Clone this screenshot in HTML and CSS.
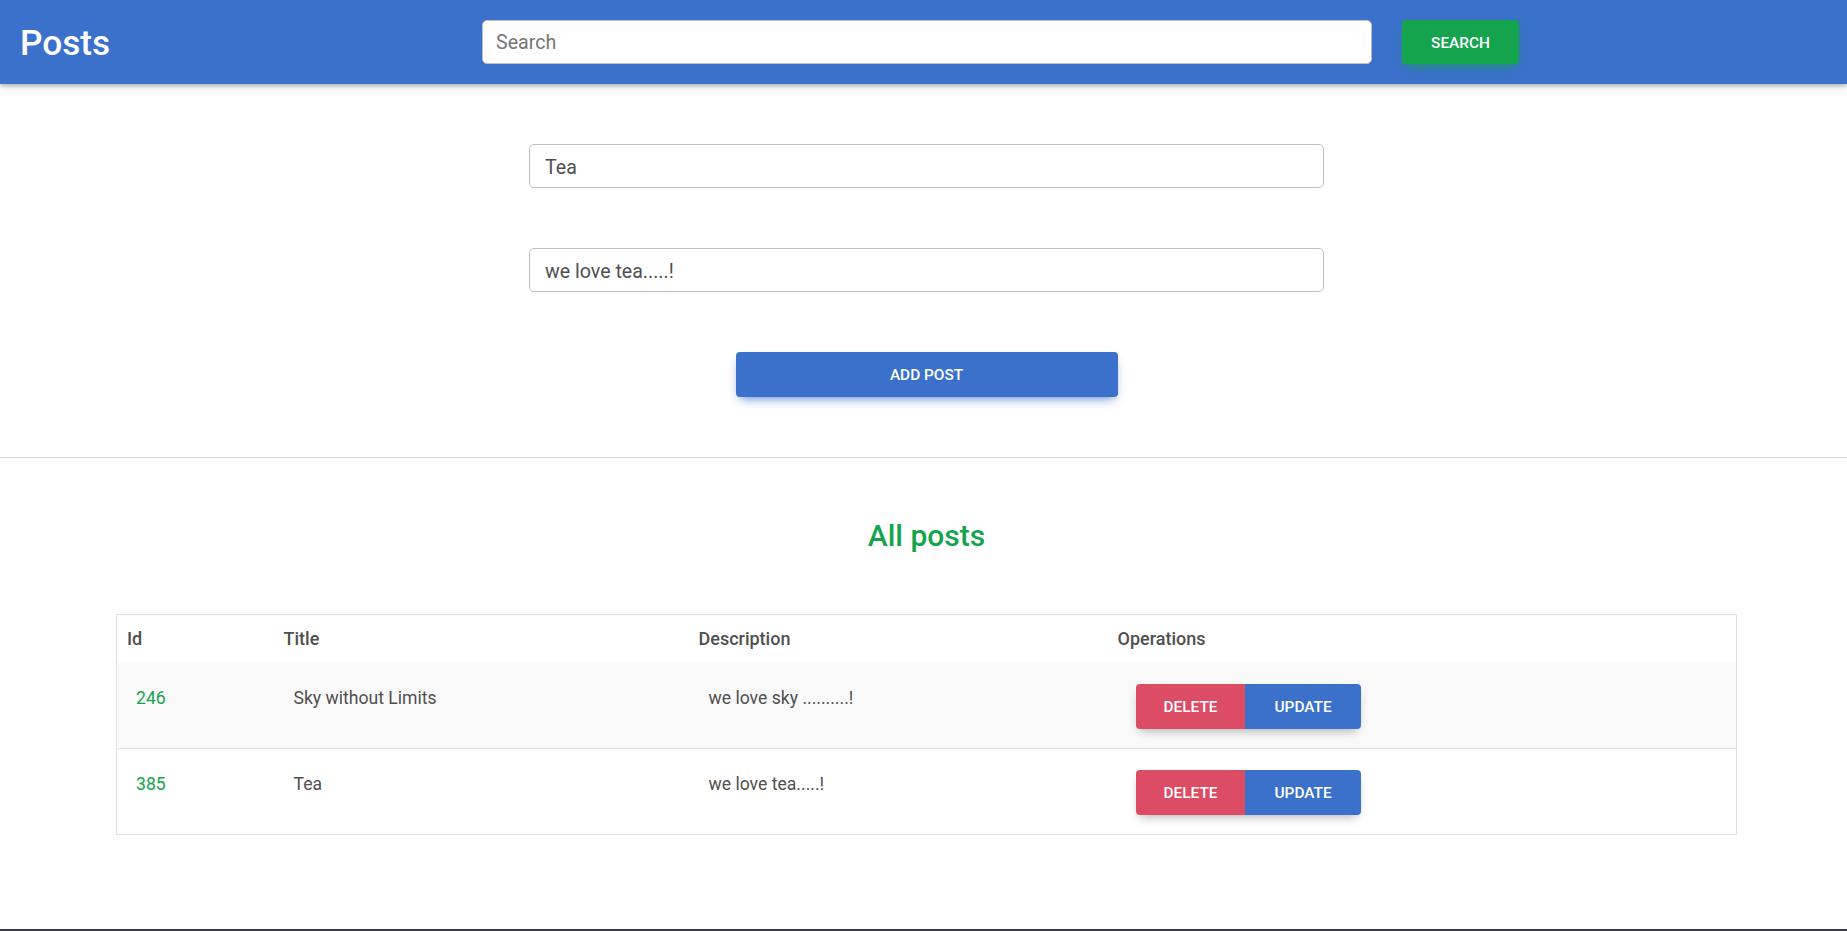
FILE: index.html
```html
<!DOCTYPE html>
<html lang="en">
<head>
<meta charset="utf-8">
<title>Posts</title>
<link rel="stylesheet" href="styles.css">
</head>
<body>
<header class="navbar">
  <h1 class="brand">Posts</h1>
  <form class="search-form">
    <input class="search-input" type="text" placeholder="Search">
    <button type="button" class="btn btn-success search-btn">Search</button>
  </form>
</header>

<section class="post-form">
  <input class="field" type="text" value="Tea">
  <input class="field" type="text" value="we love tea.....!">
  <button type="button" class="btn btn-primary add-btn">Add post</button>
</section>

<hr class="divider">

<section class="posts">
  <h2 class="posts-title">All posts</h2>
  <table class="posts-table">
    <colgroup>
      <col class="c-id">
      <col class="c-title">
      <col class="c-desc">
      <col class="c-ops">
    </colgroup>
    <thead>
      <tr>
        <th>Id</th>
        <th>Title</th>
        <th>Description</th>
        <th>Operations</th>
      </tr>
    </thead>
    <tbody>
      <tr class="striped">
        <td class="id">246</td>
        <td>Sky without Limits</td>
        <td>we love sky ..........!</td>
        <td>
          <div class="btn-group">
            <button type="button" class="btn btn-danger">Delete</button>
            <button type="button" class="btn btn-primary">Update</button>
          </div>
        </td>
      </tr>
      <tr>
        <td class="id">385</td>
        <td>Tea</td>
        <td>we love tea.....!</td>
        <td>
          <div class="btn-group">
            <button type="button" class="btn btn-danger">Delete</button>
            <button type="button" class="btn btn-primary">Update</button>
          </div>
        </td>
      </tr>
    </tbody>
  </table>
</section>

<footer class="footer"></footer>
</body>
</html>
```

FILE: styles.css
```css
html {
  overflow: hidden;
}

body {
  margin: 0;
  font-family: Roboto, "Liberation Sans", sans-serif;
  color: #4f4f4f;
  background: #fff;
}

/* ---------- navbar ---------- */
.navbar {
  height: 84px;
  background: #3b71ca;
  display: flex;
  align-items: center;
  padding-left: 20px;
  box-shadow: 0 2px 4px rgba(0, 0, 0, 0.28), 0 4px 12px rgba(0, 0, 0, 0.07);
  position: relative;
  z-index: 1;
}

.brand {
  margin: 0;
  padding-top: 2px;
  width: 462px;
  font-size: 35.2px;
  font-weight: 500;
  color: #fff;
  line-height: 1.2;
}

.search-form {
  display: flex;
  align-items: center;
  gap: 30px;
  margin: 0;
}

.search-input {
  box-sizing: border-box;
  width: 890px;
  height: 44px;
  border: 1px solid #bdbdbd;
  border-radius: 5px;
  padding: 1px 13px 0;
  font-family: inherit;
  font-size: 19.6px;
  color: #4f4f4f;
  background: #fff;
  outline: none;
}

.search-input::placeholder {
  color: #757575;
}

/* ---------- buttons ---------- */
.btn {
  box-sizing: border-box;
  border: 0;
  border-radius: 4px;
  height: 45px;
  padding: 3px 29px 0;
  font-family: inherit;
  font-size: 15.4px;
  font-weight: 500;
  text-transform: uppercase;
  color: #fff;
  cursor: pointer;
  line-height: 1;
}

.btn-primary {
  background: #3b71ca;
  box-shadow: 0 5px 10px -4px rgba(59, 113, 202, 0.9);
}

.btn-success {
  background: #14a44d;
  box-shadow: 0 5px 10px -4px rgba(20, 164, 77, 0.9);
}

.btn-danger {
  background: #dc4c64;
}

.search-btn {
  width: 117px;
  height: 44px;
  padding: 3px 0 0;
}

/* ---------- form ---------- */
.post-form {
  display: flex;
  flex-direction: column;
  align-items: center;
  gap: 60px;
  padding: 60px 0 60px 6px;
}

.field {
  box-sizing: border-box;
  width: 795px;
  height: 44px;
  border: 1px solid #bdbdbd;
  border-radius: 5px;
  padding: 2px 15px 0;
  font-family: inherit;
  font-size: 19.6px;
  color: #4f4f4f;
  background: #fff;
  outline: none;
}

.add-btn {
  width: 382px;
  padding: 3px 0 0;
}

.divider {
  margin: 0;
  border: 0;
  border-top: 1px solid #dcdcdc;
}

/* ---------- posts ---------- */
.posts {
  padding: 60px 0 0 6px;
  display: flex;
  flex-direction: column;
  align-items: center;
  gap: 60px;
}

.posts-title {
  margin: 0;
  font-size: 30px;
  font-weight: 500;
  line-height: 36px;
  color: #14a44d;
}

.posts-table {
  width: 1620px;
  border-collapse: collapse;
  table-layout: fixed;
  border: 1px solid #e0e0e0;
}

.c-id { width: 157px; }
.c-title { width: 415px; }
.c-desc { width: 419px; }
.c-ops { width: 629px; }

.posts-table th {
  text-align: left;
  font-size: 18px;
  font-weight: 500;
  line-height: 26px;
  padding: 11px 10px;
  color: #4f4f4f;
}

.posts-table td {
  font-size: 17.6px;
  line-height: 28px;
  padding: 21px 20px 19px;
  vertical-align: top;
  border-top: 1px solid #e0e0e0;
  color: #4f4f4f;
}

.posts-table td:first-child {
  padding-left: 19px;
}

.posts-table tbody tr:first-child td {
  border-top: 0;
}

.posts-table tr.striped td {
  background: #f9f9f9;
}

.posts-table td.id {
  color: #14a44d;
}

.btn-group {
  display: inline-flex;
  margin-left: 8px;
  border-radius: 4px;
  box-shadow: 0 5px 10px -4px rgba(0, 0, 0, 0.35);
}

.btn-group .btn {
  box-shadow: none;
  border-radius: 0;
  padding: 3px 28px 0;
}

.btn-group .btn-primary {
  padding: 3px 29px 0;
}

.btn-group .btn:first-child {
  border-radius: 4px 0 0 4px;
}

.btn-group .btn:last-child {
  border-radius: 0 4px 4px 0;
}

/* ---------- footer ---------- */
.footer {
  margin-top: 94px;
  height: 40px;
  background: #3a3a44;
}
```
